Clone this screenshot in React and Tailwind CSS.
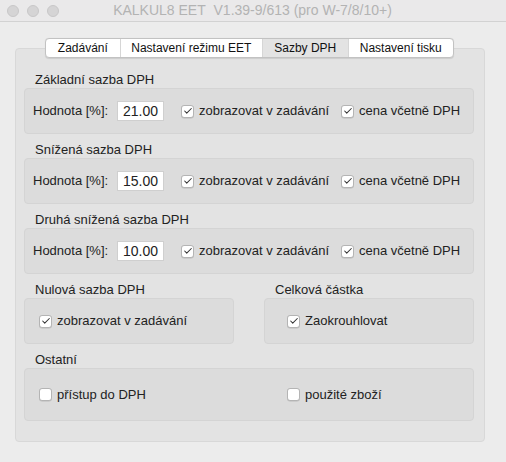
import { Check } from 'lucide-react';

const TABS = [
  { label: 'Zadávání', w: 'w-[74px]' },
  { label: 'Nastavení režimu EET', w: 'w-[143px]' },
  { label: 'Sazby DPH', w: 'w-[86px]', active: true },
  { label: 'Nastavení tisku', w: 'w-[106px]' },
];

const RATES = [
  { title: 'Základní sazba DPH', value: '21.00' },
  { title: 'Snížená sazba DPH', value: '15.00' },
  { title: 'Druhá snížená sazba DPH', value: '10.00' },
];

function Box({ checked }) {
  return (
    <span className="w-[13px] h-[13px] shrink-0 flex items-center justify-center bg-white border border-[#b4b4b4] rounded-[3px] shadow-[0_0.5px_0.5px_rgba(0,0,0,0.15)]">
      {checked && <Check className="w-[10px] h-[10px] text-[#333]" strokeWidth={2.5} />}
    </span>
  );
}

function CheckItem({ label, checked = true }) {
  return (
    <label className="flex items-center gap-[5px] whitespace-nowrap">
      <Box checked={checked} />
      <span>{label}</span>
    </label>
  );
}

function SectionTitle({ children, className = '' }) {
  return <div className={`h-4 leading-4 pl-[11px] ${className}`}>{children}</div>;
}

function Group({ children, className = '' }) {
  return (
    <div className={`bg-[#dcdcdc] border border-[#d4d4d4] rounded-[4px] flex items-center ${className}`}>
      {children}
    </div>
  );
}

export default function App() {
  return (
    <div
      className="w-[506px] h-[462px] bg-[#ececec] text-[13px] text-[#222] overflow-hidden"
      style={{ fontFamily: '"Liberation Sans", Arial, sans-serif' }}
    >
      <div className="h-[22px] border-b border-[#d2d2d2] bg-[#eae9ea] flex items-center">
        <div className="flex gap-[8px] pl-[7px]">
          <span className="w-[12px] h-[12px] rounded-full bg-[#d5d4d5] border border-[#c8c7c8]" />
          <span className="w-[12px] h-[12px] rounded-full bg-[#d5d4d5] border border-[#c8c7c8]" />
          <span className="w-[12px] h-[12px] rounded-full bg-[#d5d4d5] border border-[#c8c7c8]" />
        </div>
        <div className="flex-1 text-center text-[#b3b3b3] pr-[60px] text-[14px]">
          KALKUL8 EET&nbsp; V1.39-9/613 (pro W-7/8/10+)
        </div>
      </div>

      <div className="pt-[16px]">
        <div className="relative z-10 flex ml-[45px] h-[20px] w-[409px] bg-white border border-[#c2c2c2] rounded-[4px] overflow-hidden text-[12px] text-[#111] shadow-[0_0.5px_1px_rgba(0,0,0,0.1)]">
          {TABS.map((t, i) => (
            <div
              key={t.label}
              className={`${t.w} h-full flex items-center justify-center ${
                i > 0 ? 'border-l border-[#d6d6d6]' : ''
              } ${t.active ? 'bg-[#e3e3e3]' : ''}`}
            >
              {t.label}
            </div>
          ))}
        </div>

        <div className="ml-[15px] -mt-[10px] w-[470px] h-[394px] bg-[#e3e3e3] border border-[#d8d8d8] rounded-[4px] pt-[23px] pl-[8px]">
          {RATES.map((r, i) => (
            <div key={r.title} className={i > 0 ? 'mt-[8px]' : ''}>
              <SectionTitle>{r.title}</SectionTitle>
              <Group className="w-[450px] h-[46px] pl-[8px]">
                <span className="w-[84px]">Hodnota [%]:</span>
                <div className="w-[47px] h-[20px] bg-white border border-[#cfcfcf] flex items-center justify-end pr-[5px] text-[14px]">
                  {r.value}
                </div>
                <div className="ml-[17px] w-[160px]">
                  <CheckItem label="zobrazovat v zadávání" />
                </div>
                <CheckItem label="cena včetně DPH" />
              </Group>
            </div>
          ))}

          <div className="mt-[8px] flex">
            <div>
              <SectionTitle>Nulová sazba DPH</SectionTitle>
              <Group className="w-[210px] h-[46px] pl-[14px]">
                <CheckItem label="zobrazovat v zadávání" />
              </Group>
            </div>
            <div className="ml-[30px]">
              <SectionTitle>Celková částka</SectionTitle>
              <Group className="w-[210px] h-[46px] pl-[22px]">
                <CheckItem label="Zaokrouhlovat" />
              </Group>
            </div>
          </div>

          <div className="mt-[8px]">
            <SectionTitle>Ostatní</SectionTitle>
            <Group className="w-[450px] h-[53px] pl-[14px]">
              <div className="w-[248px]">
                <CheckItem label="přístup do DPH" checked={false} />
              </div>
              <CheckItem label="použité zboží" checked={false} />
            </Group>
          </div>
        </div>
      </div>
    </div>
  );
}
